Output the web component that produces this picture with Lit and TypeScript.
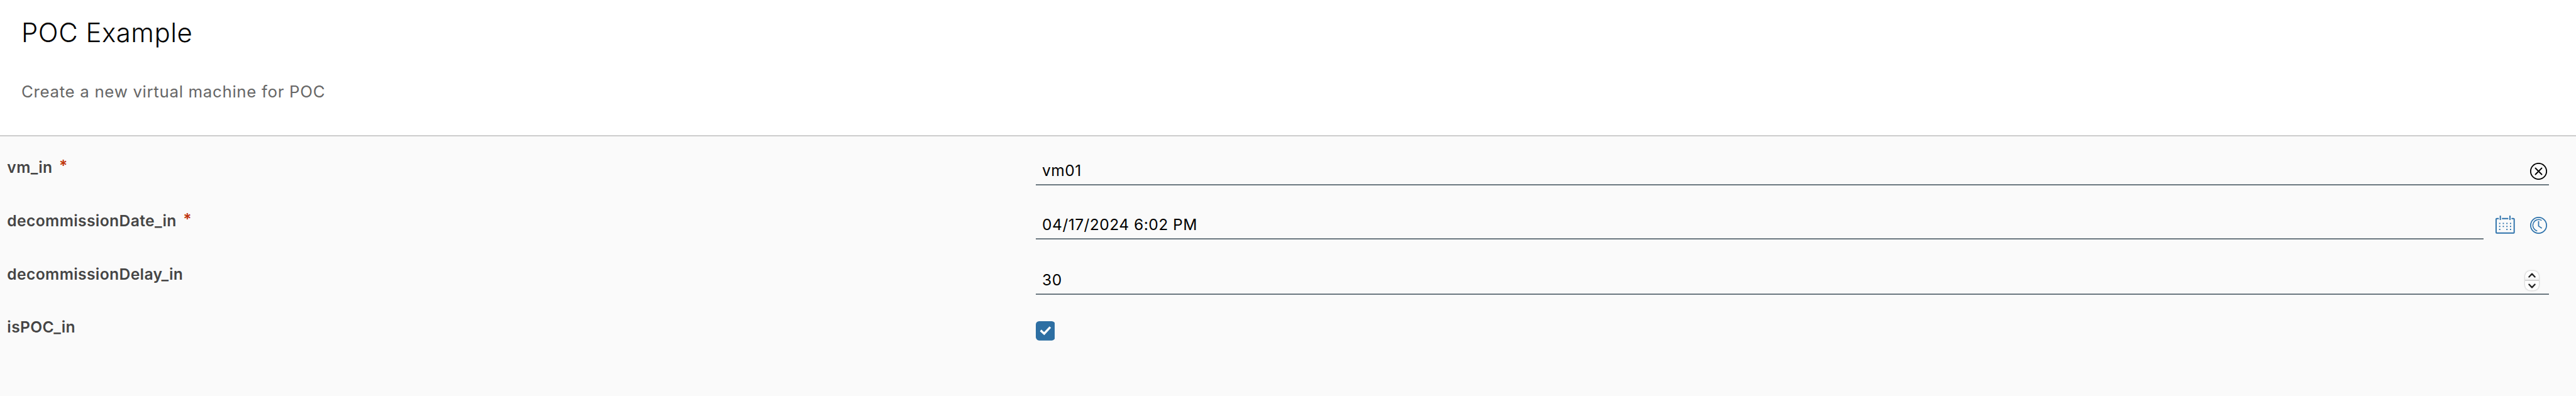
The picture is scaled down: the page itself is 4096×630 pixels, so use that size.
import { LitElement, html, css, svg, nothing } from "lit";
import { customElement, property } from "lit/decorators.js";

const clearIcon = html`<svg class="icon round" viewBox="0 0 28 28" fill="none" stroke="#000" stroke-width="1.9">
  <circle cx="14" cy="14" r="13.1" />
  <path d="M8.8 8.8L19.2 19.2M19.2 8.8L8.8 19.2" stroke-linecap="round" />
</svg>`;

const dots = [
  [7, 13], [13, 13], [19, 13], [25, 13],
  [7, 18], [13, 18], [19, 18], [25, 18],
  [7, 23], [19, 23], [25, 23],
];

const calendarIcon = html`<svg class="icon calendar" viewBox="0 0 32 30" fill="none" stroke="#2d72ab" stroke-width="2">
  <path d="M5.5 5H2Q1 5 1 6V28Q1 29 2 29H30Q31 29 31 28V6Q31 5 30 5H26.5M10.7 5H21.3" />
  <path d="M8 0V7.4M24 0V7.4" />
  ${dots.map(([x, y]) => svg`<rect x=${x - 1} y=${y - 1} width="2" height="2" fill="#2d72ab" stroke="none" />`)}
</svg>`;

const clockIcon = html`<svg class="icon round" viewBox="0 0 28 28" fill="none" stroke="#2d72ab" stroke-width="1.8">
  <circle cx="14" cy="14" r="13.1" />
  <path d="M14 7V15.2L19.4 18.8" />
  <path d="M19.1 5.9A9.5 9.5 0 1 0 11.8 23.2" stroke-width="1.5" />
</svg>`;

@customElement("form-row")
class FormRow extends LitElement {
  @property() label = "";
  @property({ type: Boolean }) required = false;

  static styles = css`
    :host {
      display: grid;
      grid-template-columns: 1646.6px minmax(0, 1fr);
      align-items: start;
      height: 84.4px;
    }
    .label {
      display: flex;
      padding-left: 11.3px;
      font-weight: 600;
      font-size: 24.6px;
      line-height: 30px;
      letter-spacing: 0.4px;
      color: #454545;
    }
    .star {
      margin: -3px 0 0 10.5px;
      color: #c0360c;
    }
  `;

  render() {
    return html`
      <div class="label">${this.label}${this.required ? html`<span class="star">*</span>` : nothing}</div>
      <slot></slot>
    `;
  }
}

@customElement("app-root")
class AppRoot extends LitElement {
  static styles = css`
    :host {
      display: flex;
      flex-direction: column;
      height: 630px;
      background: #fafafa;
      font-family: Inter, "Open Sans", sans-serif;
      color: #000;
    }
    .header {
      box-sizing: border-box;
      height: 217px;
      padding: 28px 34px 0;
      background: #fff;
      border-bottom: 2px solid #ccc;
    }
    .title {
      margin: 0;
      font-size: 41.8px;
      font-weight: 340;
      line-height: 48px;
      letter-spacing: 0.6px;
    }
    .subtitle {
      margin: 54px 0 0;
      font-size: 25.8px;
      line-height: 32px;
      letter-spacing: 0.7px;
      color: #666;
    }
    .form {
      padding: 33.6px 43.1px 0 0;
    }
    .tall {
      height: 85.9px;
    }
    .group {
      display: flex;
      align-items: flex-start;
    }
    .input {
      box-sizing: border-box;
      display: flex;
      align-items: flex-start;
      flex: 1;
      height: 38.9px;
      margin-top: 5.5px;
      padding-left: 10.5px;
      border-bottom: 2px solid #6b7880;
      font-size: 24.5px;
      line-height: 30px;
      letter-spacing: 0.5px;
    }
    .number {
      height: 39.5px;
      margin-top: 8.7px;
    }
    .value {
      flex: 1;
    }
    .icon {
      display: block;
      flex: none;
    }
    .round {
      width: 27px;
      height: 27px;
      margin: 2.6px 2.9px 0 0;
    }
    .calendar {
      width: 30.65px;
      height: 28.74px;
      margin: 6.5px 23.9px 0 19.2px;
    }
    .group > .round {
      margin-top: 8.2px;
    }
    .spinner {
      display: flex;
      flex-direction: column;
      gap: 2px;
      width: 21.6px;
      height: 31.6px;
      margin: 1px 16px 0 0;
      overflow: hidden;
      border-radius: 8.5px;
      background: #d6d6d6;
      box-shadow: 0 0 2.5px rgba(0, 0, 0, 0.36);
    }
    .step {
      display: grid;
      place-items: center;
      flex: 1;
      background: #fff;
    }
    .step:first-child {
      background: linear-gradient(#fff 60%, #f1f1f1);
    }
    .step svg {
      display: block;
      width: 12px;
      height: 8px;
    }
    .checkbox {
      display: block;
      width: 30.65px;
      height: 30.65px;
      margin-top: 6px;
    }
  `;

  render() {
    return html`
      <div class="header">
        <h1 class="title">POC Example</h1>
        <p class="subtitle">Create a new virtual machine for POC</p>
      </div>
      <div class="form">
        <form-row class="tall" label="vm_in" required>
          <div class="input"><span class="value">vm01</span>${clearIcon}</div>
        </form-row>
        <form-row label="decommissionDate_in" required>
          <div class="group">
            <div class="input"><span class="value">04/17/2024 6:02 PM</span></div>
            ${calendarIcon}${clockIcon}
          </div>
        </form-row>
        <form-row label="decommissionDelay_in">
          <div class="input number">
            <span class="value">30</span>
            <div class="spinner">
              <div class="step">
                <svg viewBox="0 0 12 8" fill="none" stroke="#262626" stroke-width="2.4" stroke-linecap="round" stroke-linejoin="round"><path d="M1.4 6.5L6 1.7L10.6 6.5" /></svg>
              </div>
              <div class="step">
                <svg viewBox="0 0 12 8" fill="none" stroke="#262626" stroke-width="2.4" stroke-linecap="round" stroke-linejoin="round"><path d="M1.4 1.5L6 6.3L10.6 1.5" /></svg>
              </div>
            </div>
          </div>
        </form-row>
        <form-row label="isPOC_in">
          <svg class="checkbox" viewBox="0 0 32 32">
            <rect width="32" height="32" rx="5.5" fill="#2d6fa3" />
            <path d="M8 15.3L13.9 20.6L24 9.8" fill="none" stroke="#fff" stroke-width="3.6" />
          </svg>
        </form-row>
      </div>
    `;
  }
}
